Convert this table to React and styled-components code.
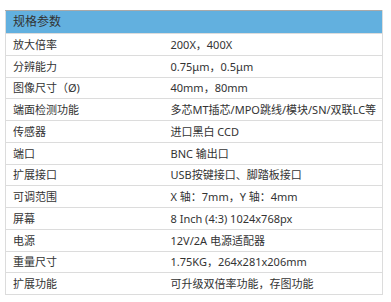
import React from 'react'
import styled, { createGlobalStyle } from 'styled-components'

const GlobalStyle = createGlobalStyle`
body {
  margin: 0;
  background: #fff;
  font-family: "Noto Sans", "Noto Sans CJK SC", sans-serif;
  color: #333;
}
`

const Page = styled.div`
padding: 10px 8px 0 5px;
`

const Table = styled.table`
width: 378px;
border-collapse: collapse;
table-layout: fixed;
border: 1px solid #dcdcdc;
border-top: 1px solid #a9a9a9;
font-size: 11px;
`

const Col = styled.col`
width: ${p => p.$width || 'auto'};
`

const HeadCell = styled.th`
background: #62b0df;
height: 22px;
padding: 0 7px;
text-align: left;
font-weight: 400;
font-size: 12px;
line-height: 16px;
`

const Row = styled.tr`
height: 21.75px;
border-top: 1px solid #dcdcdc;
`

const Cell = styled.td`
padding: 0 7px;
line-height: 15px;
white-space: nowrap;
`

const specs = [
  ['放大倍率', '200X，400X'],
  ['分辨能力', '0.75μm，0.5μm'],
  ['图像尺寸（Ø)', '40mm，80mm'],
  ['端面检测功能', '多芯MT插芯/MPO跳线/模块/SN/双联LC等'],
  ['传感器', '进口黑白 CCD'],
  ['端口', 'BNC 输出口'],
  ['扩展接口', 'USB按键接口、脚踏板接口'],
  ['可调范围', 'X 轴：7mm，Y 轴：4mm'],
  ['屏幕', '8 Inch (4:3) 1024x768px'],
  ['电源', '12V/2A 电源适配器'],
  ['重量尺寸', '1.75KG，264x281x206mm'],
  ['扩展功能', '可升级双倍率功能，存图功能'],
]

const App = () => {
  return (
    <Page>
      <GlobalStyle />
      <Table>
        <colgroup>
          <Col $width="158px" />
          <Col />
        </colgroup>
        <thead>
          <tr>
            <HeadCell colSpan={2}>规格参数</HeadCell>
          </tr>
        </thead>
        <tbody>
          {specs.map(([name, value]) => (
            <Row key={name}>
              <Cell>{name}</Cell>
              <Cell>{value}</Cell>
            </Row>
          ))}
        </tbody>
      </Table>
    </Page>
  )
}

export default App
